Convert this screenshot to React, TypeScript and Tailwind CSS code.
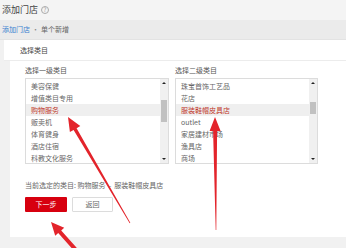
import React from "react"

const font = { fontFamily: '"Noto Sans CJK SC", "Noto Sans", sans-serif' }

const leftItems = ["美容保健", "增值类目专用", "购物服务", "贩卖机", "体育健身", "酒店住宿", "科教文化服务"]
const rightItems = ["珠宝首饰工艺品", "花店", "服装鞋帽皮具店", "outlet", "家居建材市场", "渔具店", "商场"]

function ListBox({
  items,
  selected,
  thumbTop,
  thumbHeight,
}: {
  items: string[]
  selected: number
  thumbTop: string
  thumbHeight: string
}) {
  return (
    <div className="flex h-[86px] border border-[#dcdcdc] bg-white">
      <div className="flex-1 pt-[1px]">
        {items.map((it, i) => (
          <div
            key={it}
            className={
              i === selected
                ? "h-[12px] leading-[12px] pl-[5px] text-[7px] bg-[#efefef] text-[#c0392b]"
                : "h-[12px] leading-[12px] pl-[5px] text-[7px] text-[#666]"
            }
          >
            {it}
          </div>
        ))}
      </div>
      <div className="w-[8px] bg-[#f0f0f0] flex flex-col items-center">
        <div className="h-[8px] flex items-center justify-center">
          <div className="w-0 h-0 border-l-[2px] border-r-[2px] border-b-[2px] border-l-transparent border-r-transparent border-b-[#222]" />
        </div>
        <div className={`w-[6px] bg-[#c1c1c1] ${thumbTop} ${thumbHeight}`} />
        <div className="flex-1" />
        <div className="h-[8px] flex items-center justify-center">
          <div className="w-0 h-0 border-l-[2px] border-r-[2px] border-t-[2px] border-l-transparent border-r-transparent border-t-[#222]" />
        </div>
      </div>
    </div>
  )
}

function Arrows() {
  return (
    <svg className="absolute inset-0 pointer-events-none" width="346" height="248" viewBox="0 0 346 248">
      <g fill="#e3242b">
        <polygon points="68,117 69.9,132.1 73.6,130 129.7,223.2 130.3,222.8 76.6,128.2 80.3,126.1" />
        <polygon points="215,117 209.6,131 213.1,131 215.7,230 216.3,230 217.1,131 220.6,131" />
        <polygon points="51,222 55.2,235.7 58.2,233 74.5,251.3 77.5,248.7 61.2,230.4 64.2,227.7" />
      </g>
    </svg>
  )
}

export default function App() {
  return (
    <div className="relative w-[346px] h-[248px] overflow-hidden bg-[#f1f1f1]" style={font}>
      <div className="h-[20px] bg-[#f4f4f4] flex items-center pl-[2px] gap-[3px]">
        <span className="text-[9px] text-[#444]">添加门店</span>
        <span className="w-[8px] h-[8px] rounded-full border border-[#aaa] text-[#999] text-[6px] leading-[6px] flex items-center justify-center">
          ?
        </span>
      </div>
      <div className="h-[20px] bg-[#ebebeb] border-b border-[#e3e3e3] flex items-center pl-[2px] text-[7px]">
        <span className="text-[#3b7fd0]">添加门店</span>
        <span className="text-[#888] mx-[2px]">·</span>
        <span className="text-[#666]">单个新增</span>
      </div>
      <div className="ml-[4px] h-[21px] bg-white border-b border-[#ececec] flex items-center pl-[16px] text-[7px] text-[#444]">
        选择类目
      </div>
      <div className="ml-[10px] h-[176px] bg-white pl-[15px] pt-[4px]">
        <div className="flex gap-[6px]">
          <div className="w-[144px]">
            <div className="h-[10px] leading-[10px] text-[7px] text-[#555] mb-[3px]">选择一级类目</div>
            <ListBox items={leftItems} selected={2} thumbTop="mt-[13px]" thumbHeight="h-[22px]" />
          </div>
          <div className="w-[143px]">
            <div className="h-[10px] leading-[10px] text-[7px] text-[#555] mb-[3px]">选择二级类目</div>
            <ListBox items={rightItems} selected={2} thumbTop="mt-[15px]" thumbHeight="h-[12px]" />
          </div>
        </div>
        <div className="mt-[16px] text-[7px] text-[#666] leading-[10px]">
          当前选定的类目: 购物服务 &nbsp;-&nbsp; 服装鞋帽皮具店
        </div>
        <div className="mt-[7px] flex gap-[5px]">
          <button className="w-[42px] h-[15px] bg-[#d7000f] text-white text-[7px] rounded-[1px] flex items-center justify-center">
            下一步
          </button>
          <button className="w-[41px] h-[15px] bg-white border border-[#dcdcdc] text-[#666] text-[7px] rounded-[1px] flex items-center justify-center">
            返回
          </button>
        </div>
      </div>
      <Arrows />
    </div>
  )
}
